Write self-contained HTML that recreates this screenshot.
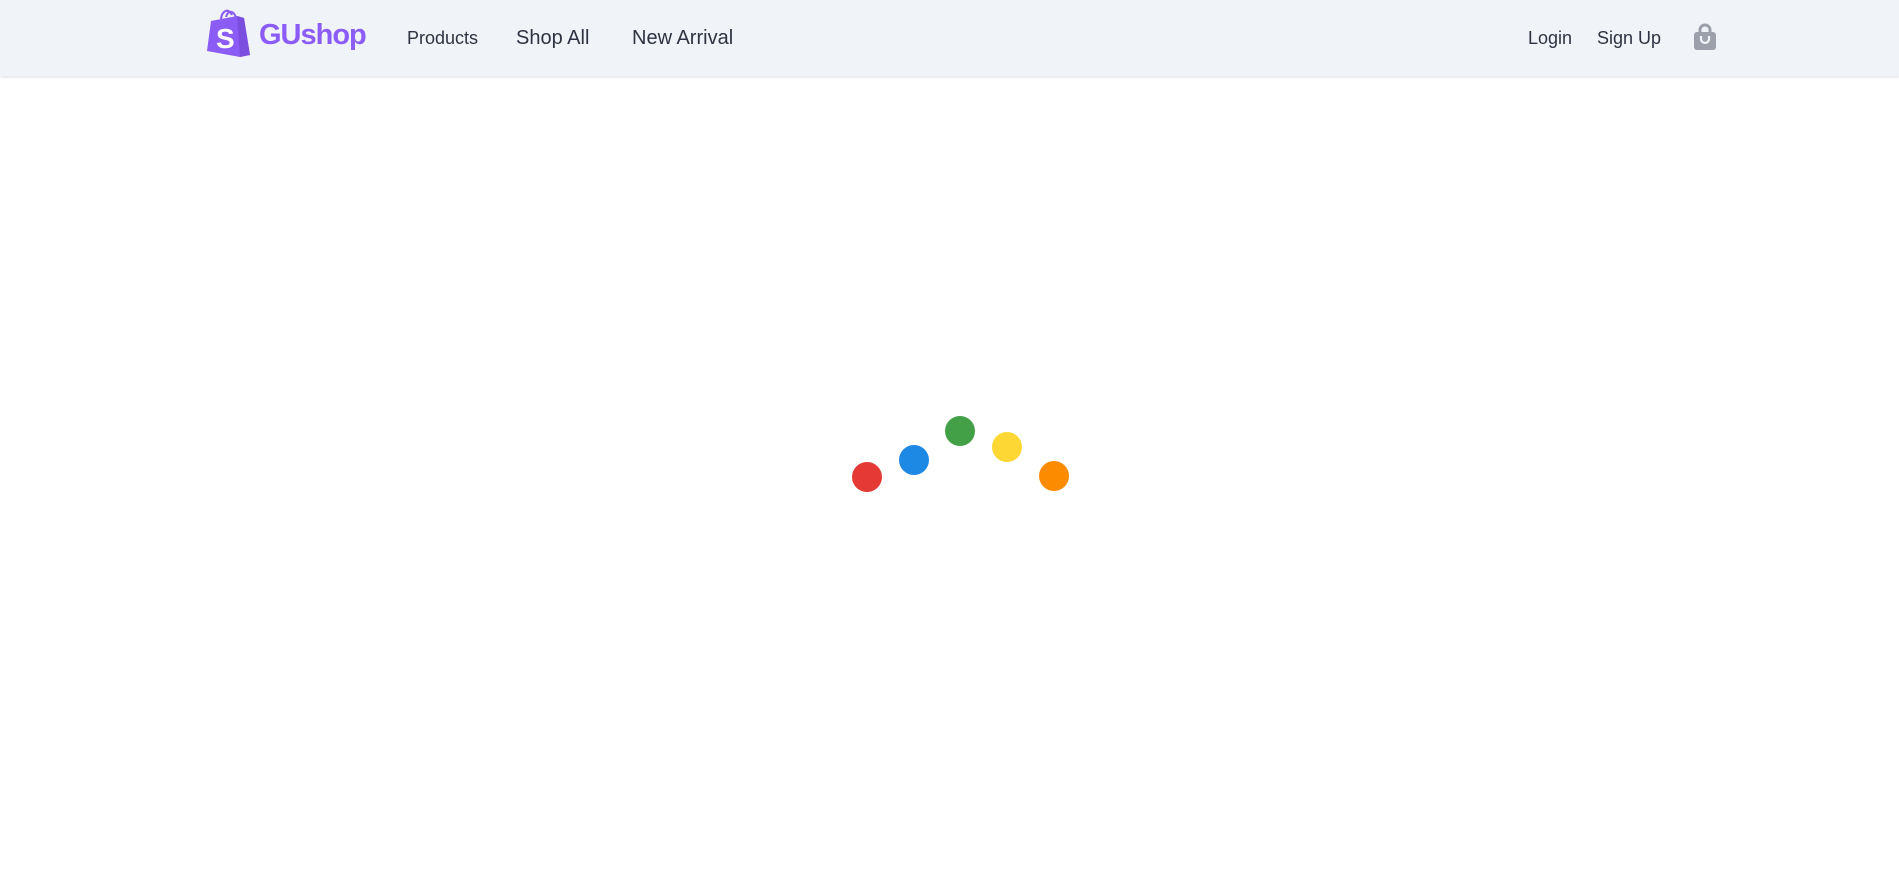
<!DOCTYPE html>
<html><head><meta charset="utf-8"><style>
body{margin:0;width:1899px;height:874px;background:#fff;font-family:"Liberation Sans",sans-serif;position:relative;overflow:hidden}
nav{position:absolute;left:0;top:0;width:1899px;height:76px;background:#f0f3f8;box-shadow:0 1px 3px rgba(0,0,0,.15)}
.t{position:absolute;color:#2d3342;white-space:nowrap;line-height:1}
.d{position:absolute;width:30px;height:30px;border-radius:50%}
</style></head><body>
<nav>
<svg style="position:absolute;left:207px;top:7px" width="44" height="50" viewBox="0 0 44 50">
<path d="M14 12 C15 3 22 1 25 8" stroke="#8b5cf6" stroke-width="2.2" fill="none"/>
<path d="M19 10 C21 3 27 3 29 11" stroke="#8b5cf6" stroke-width="2" fill="none"/>
<path d="M4 14 L30 9 L37 11 L43 48 L33 50 L0 44 Z" fill="#8b5cf6"/>
<path d="M30 9 L37 11 L43 48 L33 50 Z" fill="#7c4ee0"/>
<text x="9" y="41" font-family="Liberation Sans" font-weight="bold" font-size="28" fill="#fff">S</text>
</svg>
<div class="t" style="left:259px;top:21px;font-size:29px;font-weight:bold;color:#8b5cf6;letter-spacing:-1px">GUshop</div>
<div class="t" style="left:407px;top:29px;font-size:18px">Products</div>
<div class="t" style="left:516px;top:28px;font-size:20px">Shop All</div>
<div class="t" style="left:632px;top:28px;font-size:20px">New Arrival</div>
<div class="t" style="left:1528px;top:29px;font-size:18px">Login</div>
<div class="t" style="left:1597px;top:29px;font-size:18px">Sign Up</div>
<svg style="position:absolute;left:1694px;top:23px" width="22" height="28" viewBox="0 0 22 28">
<path d="M6 10 V7 a5 5 0 0 1 10 0 V10" stroke="#9ca0ab" stroke-width="3" fill="none"/>
<rect x="0" y="9" width="22" height="18" rx="3" fill="#9ca0ab"/>
<path d="M7 13 v3 a4 4 0 0 0 8 0 v-3" stroke="#f0f3f8" stroke-width="2.2" fill="none"/>
</svg>
</nav>
<div class="d" style="left:852px;top:462px;background:#e53935"></div>
<div class="d" style="left:899px;top:445px;background:#1e88e5"></div>
<div class="d" style="left:945px;top:416px;background:#43a047"></div>
<div class="d" style="left:992px;top:432px;background:#fdd835"></div>
<div class="d" style="left:1039px;top:461px;background:#fb8c00"></div>
</body></html>
